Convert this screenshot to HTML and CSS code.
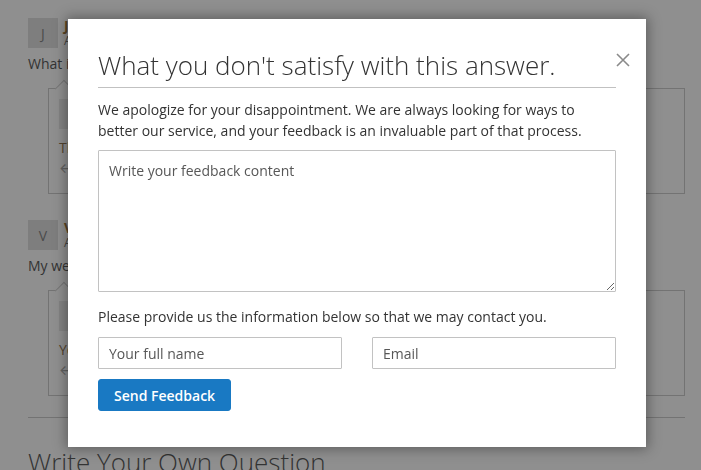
FILE: index.html
```html
<!DOCTYPE html>
<html lang="en">
<head>
<meta charset="utf-8">
<title>Feedback</title>
<link rel="stylesheet" href="styles.css">
</head>
<body>
<div class="page">
  <div class="question">
    <div class="q-head">
      <div class="avatar">J</div>
      <div class="meta">
        <div class="name">John</div>
        <div class="date">Asked on 12/05/2017</div>
      </div>
    </div>
    <div class="q-text">What is the warranty period for this product?</div>
    <div class="answer">
      <div class="avatar small">A</div>
      <div class="a-text">The warranty period is 12 months.</div>
      <div class="a-icon">&#129104;</div>
    </div>
  </div>
  <div class="question last">
    <div class="q-head">
      <div class="avatar">V</div>
      <div class="meta">
        <div class="name">Victor</div>
        <div class="date">Asked on 11/05/2017</div>
      </div>
    </div>
    <div class="q-text">My website does not work well with this extension.</div>
    <div class="answer">
      <div class="avatar small">A</div>
      <div class="a-text">You can contact our support team.</div>
      <div class="a-icon">&#129104;</div>
    </div>
  </div>
  <hr class="sep">
  <h2 class="own">Write Your Own Question</h2>
</div>

<div class="overlay"></div>

<div class="modal">
  <button class="close" type="button" aria-label="Close">
    <svg width="14" height="14" viewBox="0 0 14 14"><path d="M1 1L13 13M13 1L1 13" stroke="#8a8a8a" stroke-width="1.6" fill="none"/></svg>
  </button>
  <h1 class="modal-title">What you don't satisfy with this answer.</h1>
  <p class="intro">We apologize for your disappointment. We are always looking for ways to better our service, and your feedback is an invaluable part of that process.</p>
  <textarea class="content" placeholder="Write your feedback content"></textarea>
  <p class="info">Please provide us the information below so that we may contact you.</p>
  <div class="fields">
    <input class="field" type="text" placeholder="Your full name">
    <input class="field" type="text" placeholder="Email">
  </div>
  <button class="send" type="button">Send Feedback</button>
</div>
</body>
</html>
```

FILE: styles.css
```css
html, body {
  margin: 0;
  padding: 0;
  background: #fff;
  font-family: "Open Sans", "Liberation Sans", sans-serif;
  color: #333;
  font-size: 14px;
  overflow: hidden;
  height: 470px;
}

.page {
  padding: 18px 16px 0 28px;
}

.question {
  margin-bottom: 26px;
}

.question.last {
  margin-bottom: 21px;
}

.q-head {
  display: flex;
  gap: 6px;
  align-items: flex-start;
}

.avatar {
  width: 30px;
  height: 30px;
  background: #dadada;
  color: #6a6a6a;
  display: flex;
  align-items: center;
  justify-content: center;
  font-size: 14px;
}

.meta .name {
  font-weight: 700;
  color: #8a5a10;
  line-height: 15px;
}

.meta .date {
  font-size: 12px;
  line-height: 15px;
  color: #555;
}

.q-text {
  margin-top: 5px;
  line-height: 21px;
}

.answer {
  position: relative;
  margin: 14px 0 0 20px;
  border: 1px solid #c2c2c2;
  padding: 10px 10px 0 10px;
  box-sizing: border-box;
  height: 106px;
}

.answer::before {
  content: "";
  position: absolute;
  top: -7px;
  left: 8px;
  width: 12px;
  height: 12px;
  background: #fff;
  border-left: 1px solid #c2c2c2;
  border-top: 1px solid #c2c2c2;
  transform: rotate(45deg) scaleX(0.9);
}

.avatar.small {
  background: #e5e5e5;
  color: #888;
}

.a-text {
  margin-top: 8px;
  line-height: 21px;
  color: #7a5a2a;
}

.a-icon {
  color: #999;
  line-height: 20px;
}

.sep {
  border: 0;
  border-top: 1px solid #c2c2c2;
  margin: 0;
}

.own {
  margin: 30px 0 0;
  font-size: 26px;
  font-weight: 300;
  line-height: 28.6px;
}

.overlay {
  position: fixed;
  inset: 0;
  background: rgba(51, 51, 51, 0.55);
}

.modal {
  position: absolute;
  left: 68px;
  top: 19px;
  width: 578px;
  height: 428px;
  box-sizing: border-box;
  background: #fff;
  padding: 32px 30px 30px;
  box-shadow: 0 0 12px 2px rgba(0, 0, 0, 0.35);
}

.close {
  position: absolute;
  top: 28px;
  right: 10px;
  width: 26px;
  height: 26px;
  border: 0;
  background: none;
  padding: 0;
  display: flex;
  align-items: center;
  justify-content: center;
  cursor: pointer;
}

.modal-title {
  margin: 0;
  font-size: 26px;
  font-weight: 300;
  line-height: 28px;
  padding-bottom: 8px;
  border-bottom: 1px solid #c1c1c1;
  color: #333;
}

.intro {
  margin: 11px 0 9px;
  line-height: 21px;
}

.content {
  display: block;
  box-sizing: border-box;
  width: 100%;
  height: 142px;
  border: 1px solid #c2c2c2;
  border-radius: 1px;
  padding: 9px 10px;
  font-family: inherit;
  font-size: 14px;
  line-height: 21px;
  color: #333;
  margin: 0;
  resize: vertical;
}

.content::placeholder,
.field::placeholder {
  color: #575757;
  opacity: 1;
}

.info {
  margin: 14px 0 10px;
  line-height: 21px;
}

.fields {
  display: grid;
  grid-template-columns: 1fr 1fr;
  gap: 30px;
}

.field {
  box-sizing: border-box;
  width: 100%;
  height: 32px;
  border: 1px solid #c2c2c2;
  border-radius: 1px;
  padding: 0 10px;
  font-family: inherit;
  font-size: 14px;
  color: #333;
  margin: 0;
}

.send {
  margin-top: 10px;
  height: 32px;
  padding: 0 15px;
  background: #1979c3;
  border: 1px solid #1979c3;
  border-radius: 3px;
  color: #fff;
  font-family: inherit;
  font-size: 14px;
  font-weight: 600;
  cursor: pointer;
}
```
